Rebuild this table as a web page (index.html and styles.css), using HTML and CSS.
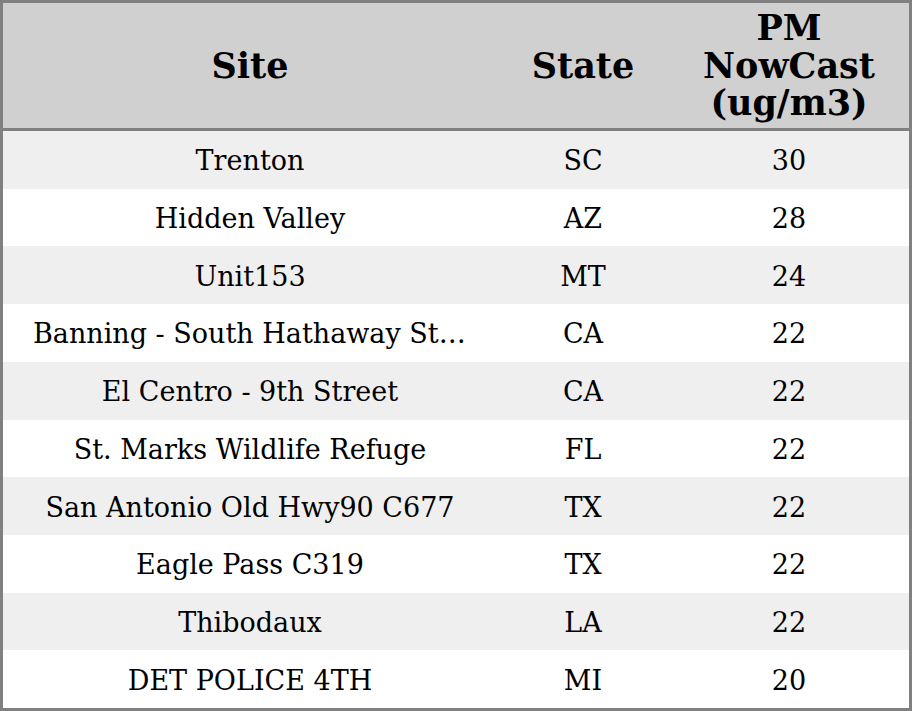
FILE: index.html
```html
<!DOCTYPE html>
<html>
<head>
<meta charset="utf-8">
<link rel="stylesheet" href="styles.css">
</head>
<body>
<div class="table">
  <div class="row head">
    <div class="cell site">Site</div>
    <div class="cell state">State</div>
    <div class="cell pm">PM<br>NowCast<br>(ug/m3)</div>
  </div>
  <div class="row odd"><div class="cell site">Trenton</div><div class="cell state">SC</div><div class="cell pm">30</div></div>
  <div class="row"><div class="cell site">Hidden Valley</div><div class="cell state">AZ</div><div class="cell pm">28</div></div>
  <div class="row odd"><div class="cell site">Unit153</div><div class="cell state">MT</div><div class="cell pm">24</div></div>
  <div class="row"><div class="cell site">Banning - South Hathaway Street</div><div class="cell state">CA</div><div class="cell pm">22</div></div>
  <div class="row odd"><div class="cell site">El Centro - 9th Street</div><div class="cell state">CA</div><div class="cell pm">22</div></div>
  <div class="row"><div class="cell site">St. Marks Wildlife Refuge</div><div class="cell state">FL</div><div class="cell pm">22</div></div>
  <div class="row odd"><div class="cell site">San Antonio Old Hwy90 C677</div><div class="cell state">TX</div><div class="cell pm">22</div></div>
  <div class="row"><div class="cell site">Eagle Pass C319</div><div class="cell state">TX</div><div class="cell pm">22</div></div>
  <div class="row odd"><div class="cell site">Thibodaux</div><div class="cell state">LA</div><div class="cell pm">22</div></div>
  <div class="row"><div class="cell site">DET POLICE 4TH</div><div class="cell state">MI</div><div class="cell pm">20</div></div>
</div>
</body>
</html>
```
FILE: styles.css
```css
html, body {
  margin: 0;
  padding: 0;
  background: #ffffff;
}
.table {
  box-sizing: border-box;
  width: 912px;
  height: 711px;
  border: 3px solid #808080;
  display: grid;
  grid-template-rows: 128px repeat(10, 1fr);
  font-family: "DejaVu Serif", serif;
  color: #000;
}
.row {
  display: grid;
  grid-template-columns: 494px 172px 1fr;
  align-items: center;
  background: #ffffff;
}
.row.odd {
  background: #efefef;
}
.row.head {
  background: #d0d0d0;
  border-bottom: 3px solid #808080;
  font-weight: bold;
}
.cell {
  text-align: center;
  font-size: 27px;
  padding: 2px 30px 0;
  white-space: nowrap;
  overflow: hidden;
  text-overflow: ellipsis;
}
.head .cell {
  font-size: 35px;
  line-height: 37.5px;
  white-space: normal;
  overflow: visible;
  padding: 0 4px;
}
```
